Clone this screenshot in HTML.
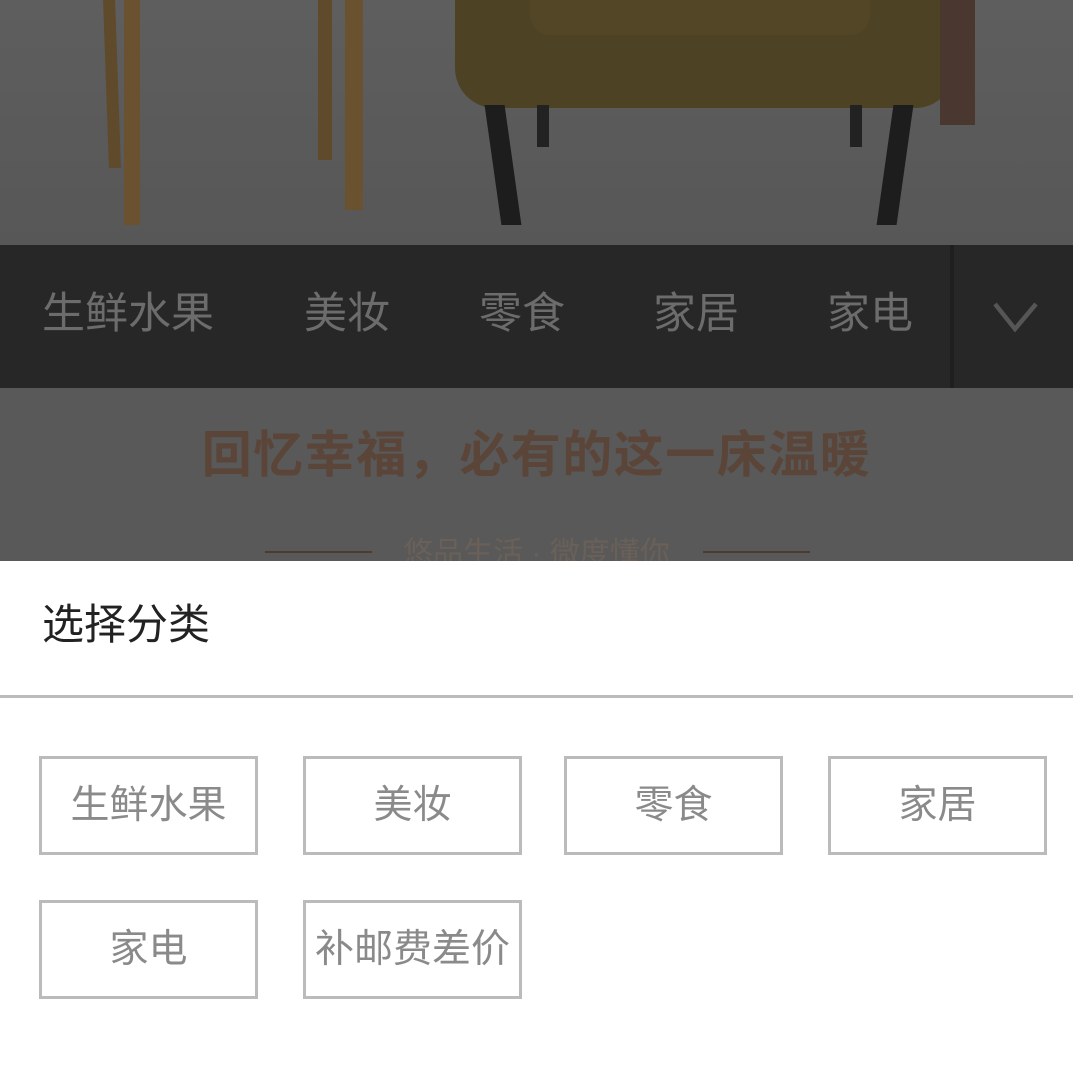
<!DOCTYPE html>
<html><head><meta charset="utf-8"><style>
*{margin:0;padding:0;box-sizing:border-box}
body{width:1073px;height:1073px;overflow:hidden;position:relative;background:#fff;font-family:"Liberation Sans","Noto Sans CJK SC",sans-serif}
.a{position:absolute}
.nav span{position:absolute;top:288px;font-size:43px;line-height:52px;color:#6c6c6c;white-space:nowrap}
.btn{position:absolute;width:219px;height:99px;border:3px solid #bbb;color:#8a8a8a;font-size:39px;display:flex;align-items:center;justify-content:center;white-space:nowrap;padding-bottom:8px}
</style></head><body>
<div class="a" style="left:0;top:0;width:1073px;height:245px;background:linear-gradient(#5e5e5e,#575757)"></div>
<div class="a" style="left:106px;top:0;width:12px;height:168px;background:#5f4a2c;transform:skewX(2deg)"></div>
<div class="a" style="left:124px;top:0;width:16px;height:225px;background:#6a5230"></div>
<div class="a" style="left:318px;top:0;width:14px;height:160px;background:#5f4a2c"></div>
<div class="a" style="left:345px;top:0;width:18px;height:210px;background:#6a5230"></div>
<div class="a" style="left:455px;top:0;width:500px;height:108px;background:#4d4223;border-radius:0 0 40px 40px"></div>
<div class="a" style="left:530px;top:0;width:340px;height:35px;background:#534626;border-radius:0 0 20px 20px"></div>
<div class="a" style="left:493px;top:105px;width:20px;height:120px;background:#1d1d1d;transform:skewX(8deg)"></div>
<div class="a" style="left:537px;top:105px;width:12px;height:42px;background:#222"></div>
<div class="a" style="left:885px;top:105px;width:20px;height:120px;background:#1d1d1d;transform:skewX(-8deg)"></div>
<div class="a" style="left:850px;top:105px;width:12px;height:42px;background:#222"></div>
<div class="a" style="left:940px;top:0;width:35px;height:125px;background:#4a3830"></div>
<div class="a nav" style="left:0;top:245px;width:1073px;height:143px;background:#272727"></div>
<div class="nav">
<span style="left:42px">生鲜水果</span><span style="left:304px">美妆</span><span style="left:479px">零食</span><span style="left:653px">家居</span><span style="left:827px">家电</span>
</div>
<div class="a" style="left:950px;top:245px;width:4px;height:143px;background:#1f1f1f"></div>
<svg class="a" style="left:990px;top:298px" width="52" height="40"><path d="M5 6 L25 31 L46 6" fill="none" stroke="#565656" stroke-width="4.5"/></svg>
<div class="a" style="left:0;top:388px;width:1073px;height:173px;background:#595959"></div>
<div class="a" style="left:0;top:424px;width:1073px;text-align:center;font-size:50px;font-weight:bold;color:#5a4538;line-height:62px;letter-spacing:1.5px">回忆幸福，必有的这一床温暖</div>
<div class="a" style="left:0;top:533px;width:1073px;text-align:center;font-size:30px;color:#6a6058;line-height:42px;height:28px;overflow:hidden">悠品生活 · 微度懂你</div>
<div class="a" style="left:265px;top:551px;width:107px;height:2px;background:#4e3a2e"></div>
<div class="a" style="left:703px;top:551px;width:107px;height:2px;background:#4e3a2e"></div>
<div class="a" style="left:0;top:561px;width:1073px;height:512px;background:#fff"></div>
<div class="a" style="left:42px;top:600px;font-size:42px;line-height:50px;color:#222">选择分类</div>
<div class="a" style="left:0;top:695px;width:1073px;height:3px;background:#bbb"></div>
<div class="btn" style="left:39px;top:756px">生鲜水果</div>
<div class="btn" style="left:303px;top:756px">美妆</div>
<div class="btn" style="left:564px;top:756px">零食</div>
<div class="btn" style="left:828px;top:756px">家居</div>
<div class="btn" style="left:39px;top:900px">家电</div>
<div class="btn" style="left:303px;top:900px">补邮费差价</div>
</body></html>
